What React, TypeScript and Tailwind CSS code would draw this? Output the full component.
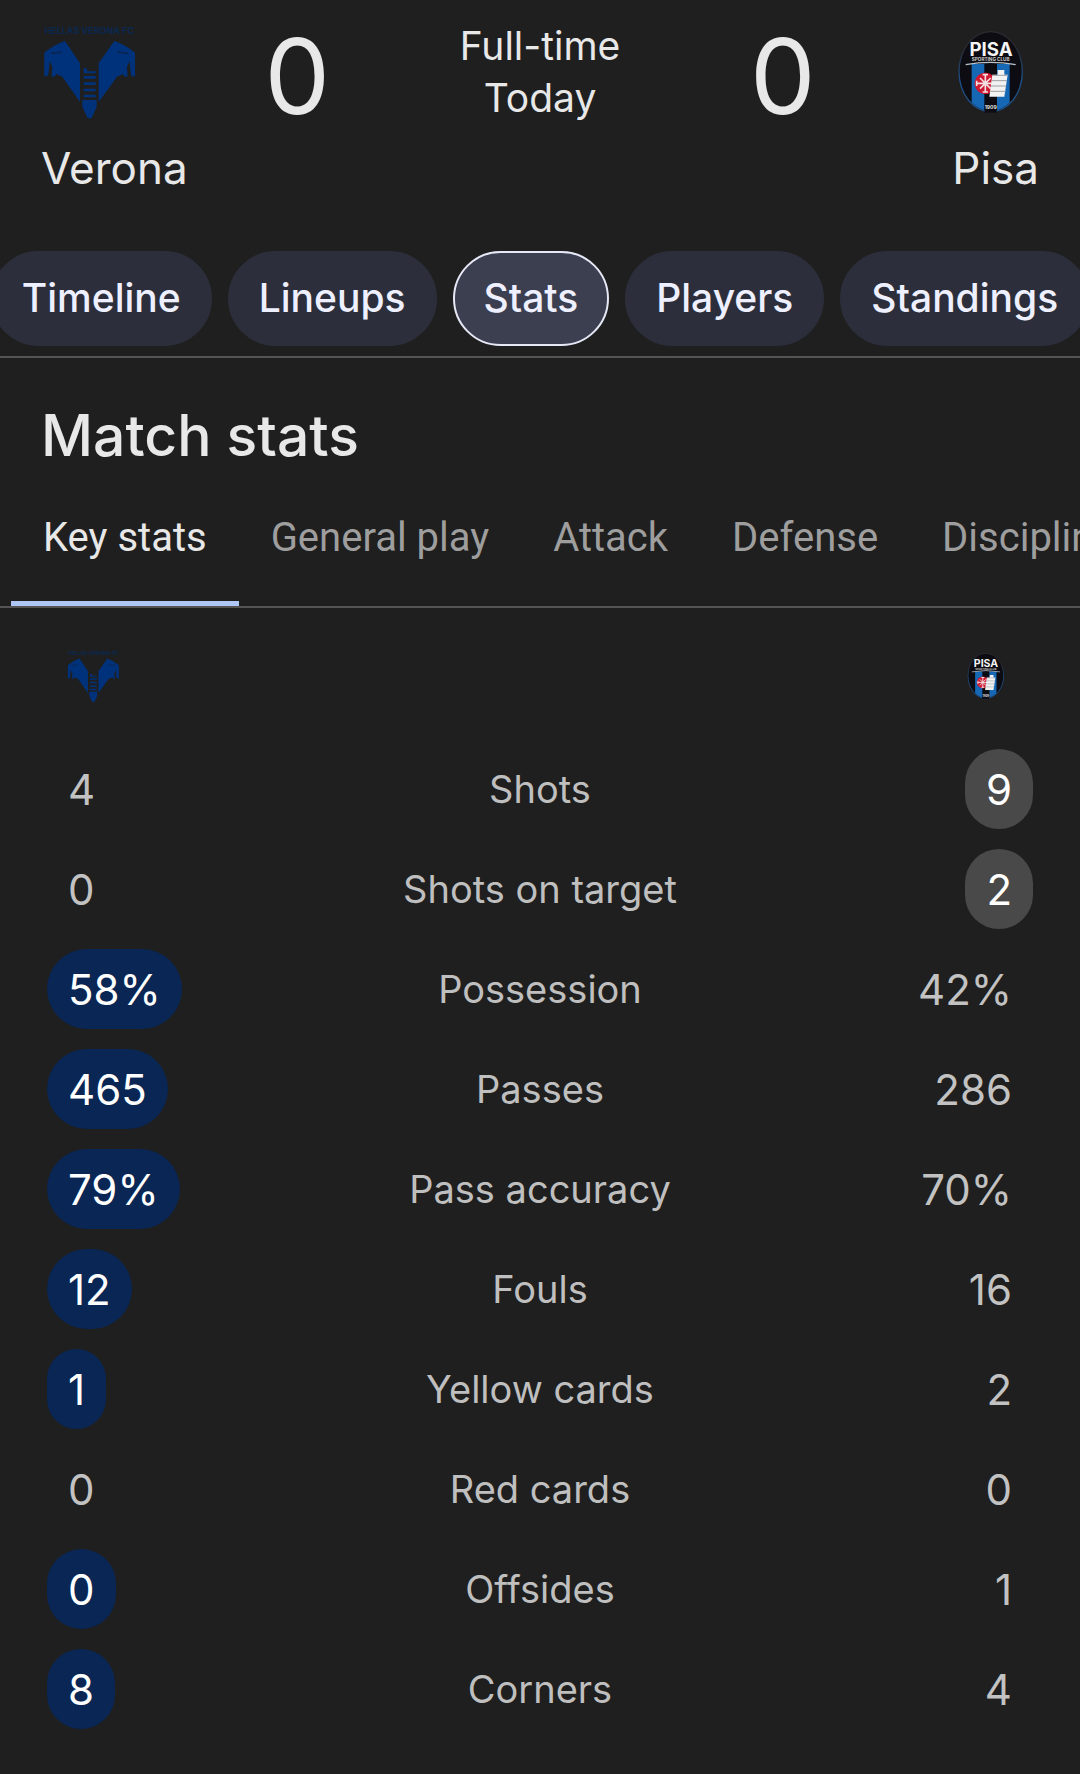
import { useState } from "react";
import clsx from "clsx";

interface LogoProps {
  className?: string;
}

interface Stat {
  label: string;
  home: string;
  away: string;
  leader?: "home" | "away";
}

const sections = ["Timeline", "Lineups", "Stats", "Players", "Standings"];

const categories = ["Key stats", "General play", "Attack", "Defense", "Discipline"];

const stats: Stat[] = [
  { label: "Shots", home: "4", away: "9", leader: "away" },
  { label: "Shots on target", home: "0", away: "2", leader: "away" },
  { label: "Possession", home: "58%", away: "42%", leader: "home" },
  { label: "Passes", home: "465", away: "286", leader: "home" },
  { label: "Pass accuracy", home: "79%", away: "70%", leader: "home" },
  { label: "Fouls", home: "12", away: "16", leader: "home" },
  { label: "Yellow cards", home: "1", away: "2", leader: "home" },
  { label: "Red cards", home: "0", away: "0" },
  { label: "Offsides", home: "0", away: "1", leader: "home" },
  { label: "Corners", home: "8", away: "4", leader: "home" },
];

function VeronaLogo({ className }: LogoProps) {
  return (
    <svg viewBox="0 0 288 288" className={className} role="img" aria-label="Verona">
      <text x="145" y="30" textAnchor="middle" fontSize="27" fontWeight="700" fill="#0a2850">
        HELLAS VERONA FC
      </text>
      <g fill="#00327c">
        {/* mastiff heads */}
        <path d="M72 51 L117 118 V234 L64 158 L46 150 L40 158 H32 L34 128 L26 112 L22 154 L10 158 V86 Q40 62 72 51Z" />
        <path d="M220 51 L173 118 V234 L228 158 L246 150 L252 158 H260 L258 128 L266 112 L270 154 L282 158 V86 Q252 62 220 51Z" />
        {/* ladder */}
        <path d="M128 133h10v9h26v6h-36z M128 156h36v8h-36z M128 175h36v8h-36z M128 194h36v8h-36z M128 212h36v8h-36z" />
        <path d="M124 228 H167 V248 L152 283 H140 L124 248Z" />
      </g>
      <path d="M30 88 L62 84 M228 84 L262 88" stroke="#0b2450" strokeWidth="5" fill="none" />
    </svg>
  );
}

function PisaLogo({ className }: LogoProps) {
  return (
    <svg viewBox="0 0 288 288" className={className} role="img" aria-label="Pisa">
      <defs>
        <clipPath id="pisa-shield">
          <ellipse cx="143" cy="143" rx="93" ry="118" />
        </clipPath>
        <linearGradient id="pisa-rim" x1="0" y1="0" x2="0" y2="1">
          <stop offset="0.2" stopColor="#2a2a30" />
          <stop offset="0.6" stopColor="#1d4f86" />
        </linearGradient>
      </defs>
      <ellipse cx="143" cy="143" rx="97" ry="122" fill="url(#pisa-rim)" />
      <g clipPath="url(#pisa-shield)">
        <rect width="288" height="288" fill="#0d0c12" />
        <path d="M86 120h38v160H86z M162 120h38v160h-38z" fill="#1668b4" />
      </g>
      <path d="M68 122 Q143 108 218 122" stroke="#b9c4cf" strokeWidth="4" fill="none" />
      <text x="144" y="96" textAnchor="middle" fontSize="56" fontWeight="700" fill="#f4f4f4">
        PISA
      </text>
      <text x="143" y="111" textAnchor="middle" fontSize="14" fontWeight="700" fill="#c9c9c9">
        SPORTING CLUB
      </text>
      <circle cx="127" cy="178" r="32" fill="#cf1830" />
      <path
        d="M127 150v56 M99 178h56 M119 152h16 M119 204h16 M101 170v16 M111 162l32 32 M143 162l-32 32"
        stroke="#f1dfe2"
        strokeWidth="5"
        fill="none"
      />
      <path d="M164 138h20v14h10l-10 66h-45l9-66h16z" fill="#f2f2f2" />
      <path
        d="M148 154h46 M146 170h46 M144 186h46 M142 202h46"
        stroke="#9c9ea2"
        strokeWidth="3"
      />
      <path d="M125 240h36v26h-36z" fill="#0d0c12" />
      <text x="143" y="256" textAnchor="middle" fontSize="15" fontWeight="700" fill="#e4e4e4">
        1909
      </text>
    </svg>
  );
}

function StatValue({ value, highlight }: { value: string; highlight?: string }) {
  return (
    <span
      className={clsx(
        "inline-flex h-20 items-center rounded-full px-[21px] text-[42px]",
        highlight ? `${highlight} text-white` : "text-[#c2c2c2]"
      )}
    >
      {value}
    </span>
  );
}

export default function App() {
  const [section, setSection] = useState("Stats");
  const [category, setCategory] = useState("Key stats");

  return (
    <div className="min-h-screen overflow-hidden bg-[#1f1f1f] pb-10 font-['Inter',sans-serif] text-[#e8e8e8]">
      <header className="grid grid-cols-[13fr_12fr_24fr_12fr_13fr] px-[41px] pt-5">
        <div className="flex flex-col items-start">
          <VeronaLogo className="mt-1 size-24" />
          <p className="mt-[22px] text-[44px] leading-[52px]">Verona</p>
        </div>
        <p className="mt-1 text-center text-[104px] leading-[104px]">0</p>
        <p className="text-center text-[39px] leading-[52px]">
          Full-time
          <br />
          Today
        </p>
        <p className="mt-1 text-center text-[104px] leading-[104px]">0</p>
        <div className="flex flex-col items-end">
          <PisaLogo className="mt-1 size-24" />
          <p className="mt-[22px] text-[44px] leading-[52px]">Pisa</p>
        </div>
      </header>

      <nav className="mt-[57px] flex justify-center gap-4 overflow-hidden border-b-2 border-[#545454] pb-2.5">
        {sections.map((name) => (
          <button
            key={name}
            type="button"
            onClick={() => setSection(name)}
            className={clsx(
              "h-[95px] shrink-0 rounded-full border-2 px-[29px] text-[39px] font-medium text-[#eef0ff]",
              section === name ? "border-[#e6e8f6] bg-[#3b3f50]" : "border-[#2c2f3b] bg-[#2c2f3b]"
            )}
          >
            {name}
          </button>
        ))}
      </nav>

      <main>
        <h1 className="mt-[42px] px-[41px] text-[57px] leading-[72px] font-medium">Match stats</h1>

        <div
          role="tablist"
          className="flex overflow-hidden border-b-2 border-[#545454] pl-[11px] font-['Roboto',sans-serif]"
        >
          {categories.map((name) => (
            <button
              key={name}
              type="button"
              role="tab"
              aria-selected={category === name}
              onClick={() => setCategory(name)}
              className={clsx(
                "shrink-0 border-b-[5px] px-8 pt-[46px] pb-[43px] text-[40px] leading-10",
                category === name ? "border-[#aec6f6] text-[#e8e8e8]" : "border-transparent text-[#9e9e9e]"
              )}
            >
              {name}
            </button>
          ))}
        </div>

        <div className="px-[47px] pt-[41px]">
          <table className="w-full table-fixed">
            <thead>
              <tr>
                <th className="px-[19px] pb-9">
                  <VeronaLogo className="size-[54px]" />
                </th>
                <td />
                <th className="px-5 pb-9">
                  <PisaLogo className="ml-auto size-[54px]" />
                </th>
              </tr>
            </thead>
            <tbody>
              {stats.map((stat) => (
                <tr key={stat.label} className="h-[100px]">
                  <td className="text-left">
                    <StatValue value={stat.home} highlight={stat.leader === "home" ? "bg-[#092654]" : undefined} />
                  </td>
                  <th scope="row" className="text-center text-[38px] font-normal whitespace-nowrap text-[#bfbfbf]">
                    {stat.label}
                  </th>
                  <td className="text-right">
                    <StatValue value={stat.away} highlight={stat.leader === "away" ? "bg-[#494949]" : undefined} />
                  </td>
                </tr>
              ))}
            </tbody>
          </table>
        </div>
      </main>
    </div>
  );
}
